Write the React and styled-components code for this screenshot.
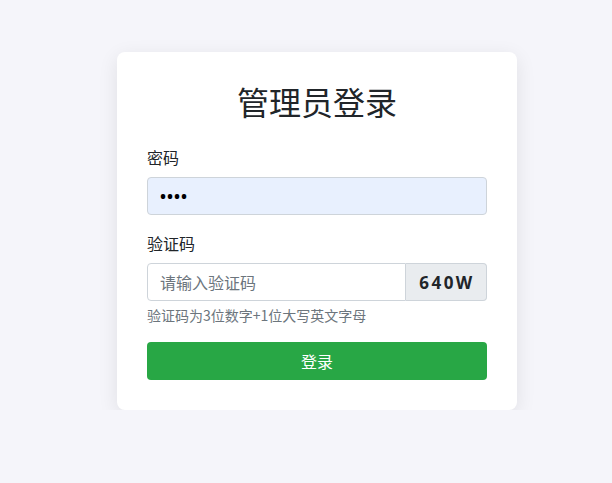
import React from "react";
import styled, { createGlobalStyle } from "styled-components";

const Global = createGlobalStyle`
  html, body { margin: 0; padding: 0; }
  body {
    background: #f5f5fa;
    font-family: "Segoe UI", "Open Sans", "Noto Sans CJK SC", sans-serif;
    color: #212529;
  }
  * { box-sizing: border-box; }
`;

const Page = styled.div`
  display: flex;
  padding: 52px 0 0 117px;
`;

const Card = styled.div`
  width: 400px;
  background: #fff;
  border-radius: 8px;
  padding: 30px;
  box-shadow: 0 5px 20px rgba(0, 0, 0, 0.09);
`;

const Title = styled.h2`
  margin: 0 0 25px;
  text-align: center;
  font-size: 32px;
  font-weight: 400;
  line-height: 1.2;
  font-family: "Noto Sans CJK SC", sans-serif;
  color: #212529;
`;

const Group = styled.div`
  margin-bottom: 16px;
`;

const Label = styled.label`
  display: block;
  margin-bottom: 8px;
  font-size: 16px;
  line-height: 1.5;
  font-family: "Noto Sans CJK SC", sans-serif;
`;

const Input = styled.input`
  display: block;
  flex: 1;
  min-width: 0;
  height: 38px;
  padding: 6px 12px;
  font-size: 16px;
  line-height: 1.5;
  font-family: "Noto Sans CJK SC", sans-serif;
  color: #212529;
  background: #fff;
  border: 1px solid #ced4da;
  border-radius: 4px 0 0 4px;
  outline: none;
  &::placeholder { color: #6c757d; }
`;

const Dots = styled.span`
  letter-spacing: 1px;
`;

const PasswordBox = styled.div`
  display: flex;
  align-items: center;
  height: 38px;
  padding: 0 12px;
  background: #e8f0fe;
  border: 1px solid #ced4da;
  border-radius: 4px;
  font-size: 16px;
  font-weight: 700;
  color: #000;
`;

const InputGroup = styled.div`
  display: flex;
`;

const Captcha = styled.div`
  display: flex;
  align-items: center;
  justify-content: center;
  width: 81px;
  height: 38px;
  padding-left: 2px;
  background: #e9ecef;
  border: 1px solid #ced4da;
  border-left: none;
  border-radius: 0 4px 4px 0;
  font-family: "Open Sans", sans-serif;
  font-weight: 700;
  font-size: 17px;
  letter-spacing: 2.5px;
  color: #212529;
`;

const Help = styled.div`
  margin-top: 4px;
  font-size: 14px;
  line-height: 1.5;
  color: #6c757d;
  font-family: "Noto Sans CJK SC", sans-serif;
`;

const Button = styled.button`
  display: block;
  width: 100%;
  height: 38px;
  border: none;
  border-radius: 4px;
  background: #28a745;
  color: #fff;
  font-size: 16px;
  font-family: "Noto Sans CJK SC", sans-serif;
`;

export default function App() {
  return (
    <>
      <Global />
      <Page>
        <Card>
          <Title>管理员登录</Title>
          <Group>
            <Label>密码</Label>
            <PasswordBox>
              <Dots>••••</Dots>
            </PasswordBox>
          </Group>
          <Group>
            <Label>验证码</Label>
            <InputGroup>
              <Input placeholder="请输入验证码" />
              <Captcha>640W</Captcha>
            </InputGroup>
            <Help>验证码为3位数字+1位大写英文字母</Help>
          </Group>
          <Button>登录</Button>
        </Card>
      </Page>
    </>
  );
}
